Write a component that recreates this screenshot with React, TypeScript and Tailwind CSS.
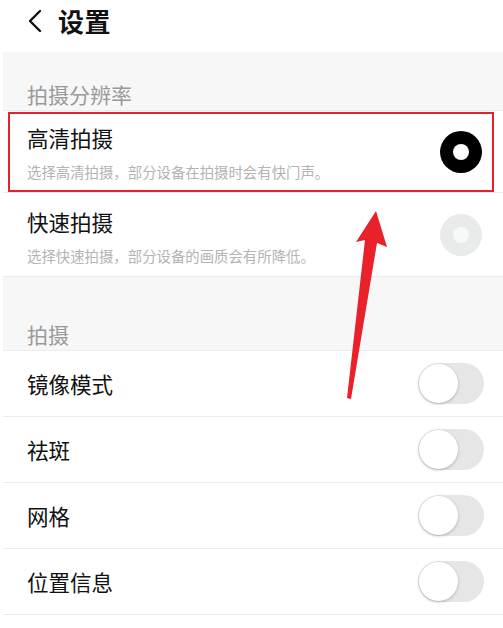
import React from 'react';

const font = { fontFamily: '"Noto Sans CJK SC", "Noto Sans", sans-serif' };

// Radio-style indicator used in resolution list
const Radio = ({ on }: { on: boolean }) =>
<div
  className={`w-[42px] h-[42px] rounded-full flex items-center justify-center ${
  on ? 'bg-black' : 'bg-[#e9eaea]'}`
  }>
  
    <div className={`w-[16px] h-[16px] rounded-full ${on ? 'bg-white' : 'bg-[#f7f8f8]'}`} />
  </div>;


const Toggle = () =>
<div className="w-[66px] h-[41px] rounded-full bg-[#e6e6e6] flex items-center pl-[1px]">
    <div className="w-[39px] h-[39px] rounded-full bg-white shadow-[0_1px_3px_rgba(0,0,0,0.25)]" />
  </div>;


const Divider = () => <div className="h-px bg-[#ececec]" />;

export default function App() {
  const toggles = ['镜像模式', '祛斑', '网格', '位置信息'];

  return (
    <div className="relative w-[503px] h-[628px] overflow-hidden bg-white pl-[3px]" style={font}>
      {/* Header */}
      <div className="h-[52px] flex items-center pl-[24px] pb-[10px]">
        <svg width="16" height="24" viewBox="0 0 16 24" className="mr-[15px]">
          <path d="M13 2 L3 12 L13 22" stroke="#111" strokeWidth="2.4" fill="none" strokeLinecap="round" strokeLinejoin="round" />
        </svg>
        <span className="text-[26px] font-bold text-[#111] leading-none tracking-[0.5px]">设置</span>
      </div>

      {/* Section: resolution */}
      <div className="h-[58px] bg-[#f7f7f7] flex items-end px-[24px] pb-[2px]">
        <span className="text-[21px] text-[#9a9a9a] leading-[28px]">拍摄分辨率</span>
      </div>
      <Divider />

      <div className="h-[81px] flex items-center justify-between pl-[24px] pr-[21px]">
        <div className="flex flex-col pt-[2px]">
          <span className="text-[21.5px] text-[#111] leading-[28px]">高清拍摄</span>
          <span className="text-[14.4px] text-[#b3b3b3] leading-[18px] mt-[11px]">选择高清拍摄，部分设备在拍摄时会有快门声。</span>
        </div>
        <Radio on />
      </div>
      <Divider />

      <div className="h-[83px] flex items-center justify-between pl-[24px] pr-[21px]">
        <div className="flex flex-col pt-[4px]">
          <span className="text-[21.5px] text-[#111] leading-[28px]">快速拍摄</span>
          <span className="text-[14.4px] text-[#b3b3b3] leading-[18px] mt-[11px]">选择快速拍摄，部分设备的画质会有所降低。</span>
        </div>
        <Radio on={false} />
      </div>
      <Divider />

      {/* Section: shooting */}
      <div className="h-[73px] bg-[#f7f7f7] flex items-end px-[24px] pb-[2px]">
        <span className="text-[21px] text-[#9a9a9a] leading-[28px]">拍摄</span>
      </div>
      <Divider />

      {toggles.map((label) =>
      <div key={label}>
          <div className="h-[65px] flex items-center justify-between pl-[24px] pr-[19px]">
            <span className="text-[21.5px] text-[#111] leading-[28px]">{label}</span>
            <Toggle />
          </div>
          <Divider />
        </div>
      )}

      {/* Annotation: red highlight box */}
      <div className="absolute left-[8px] top-[112px] w-[486px] h-[80px] border-2 border-[#e3232e] pointer-events-none" />

      {/* Annotation: red arrow */}
      <svg className="absolute left-0 top-0 pointer-events-none" width="503" height="628" viewBox="0 0 503 628">
        <polygon
          points="376,211 387,247 377,243 351,399 347,398 365,240 356,242"
          fill="#e8212b" />
        
      </svg>
    </div>);

}
